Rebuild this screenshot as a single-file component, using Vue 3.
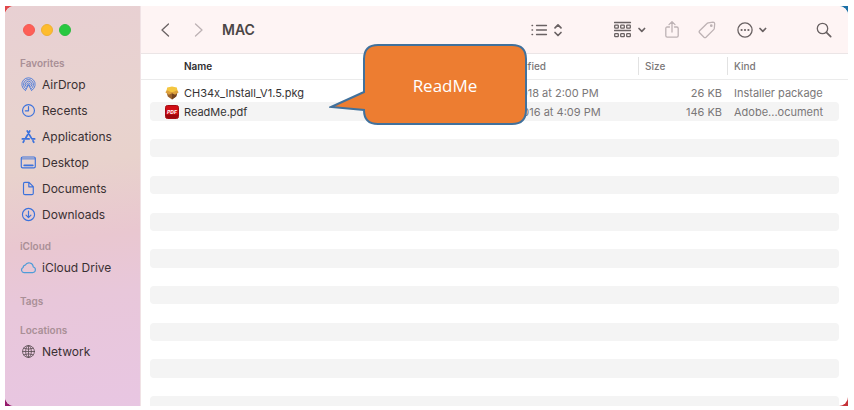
<script setup>
const sections = [
  {
    title: 'Favorites',
    key: 'favorites',
    items: [
      { label: 'AirDrop', icon: 'airdrop' },
      { label: 'Recents', icon: 'clock' },
      { label: 'Applications', icon: 'apps' },
      { label: 'Desktop', icon: 'screen' },
      { label: 'Documents', icon: 'document' },
      { label: 'Downloads', icon: 'download' }
    ]
  },
  { title: 'iCloud', key: 'icloud', items: [{ label: 'iCloud Drive', icon: 'cloud' }] },
  { title: 'Tags', key: 'tags', items: [] },
  { title: 'Locations', key: 'locations', items: [{ label: 'Network', icon: 'globe' }] }
]

const files = [
  { name: 'CH34x_Install_V1.5.pkg', date: 'Jun 5, 2018 at 2:00 PM', size: '26 KB', kind: 'Installer package', icon: 'pkg' },
  { name: 'ReadMe.pdf', date: 'Nov 6, 2016 at 4:09 PM', size: '146 KB', kind: 'Adobe...ocument', icon: 'pdf' }
]

const emptyRows = 15
</script>

<template>
  <main class="page">
    <div class="desktop">
      <div class="window">
        <aside class="sidebar">
          <div class="lights">
            <button class="light red" aria-label="Close"></button>
            <button class="light yellow" aria-label="Minimize"></button>
            <button class="light green" aria-label="Zoom"></button>
          </div>
          <nav>
            <section v-for="s in sections" :key="s.key" class="group" :class="s.key">
              <h2>{{ s.title }}</h2>
              <a v-for="item in s.items" :key="item.label" href="#" class="place" :class="item.icon">
                <svg viewBox="0 0 16 16" aria-hidden="true">
                  <g v-if="item.icon === 'airdrop'">
                    <path d="M4.6 13.3A6.3 6.3 0 1 1 11.4 13.3M5.3 11.9A4.7 4.7 0 1 1 10.7 11.9M6 10.4A3.1 3.1 0 1 1 10 10.4" />
                    <path d="M7 9.2A1.5 1.5 0 1 1 9 9.2M8 8.2 5.2 13.6M8 8.2l2.8 5.4" />
                  </g>
                  <g v-else-if="item.icon === 'clock'">
                    <circle cx="8" cy="8" r="5.6" /><path d="M8 4.3V8.3H5" />
                  </g>
                  <g v-else-if="item.icon === 'apps'" class="bold">
                    <path d="M6.8 2.8 11 10M12.2 12l.8 1.4M9.2 2.8 5.4 9.4M3.8 12l-.8 1.4M2.2 10.3H8.6M11.6 10.3h2.2" />
                  </g>
                  <g v-else-if="item.icon === 'screen'">
                    <rect x="1.2" y="2.8" width="13.2" height="10.2" rx="1.3" />
                    <path d="M1.6 4.6h12.4" class="thin" /><path d="M4 10.7h8" class="dock" />
                  </g>
                  <g v-else-if="item.icon === 'document'">
                    <path d="M4.5 2.2h4l4 4v6.2q0 1.4-1.4 1.4H4.7q-1.4 0-1.4-1.4V3.6q0-1.4 1.2-1.4zM8.3 2.4v4h4" />
                  </g>
                  <g v-else-if="item.icon === 'download'">
                    <circle cx="8" cy="8" r="5.7" /><path d="M8 4.8v6M5.7 8.6 8 10.9l2.3-2.3" />
                  </g>
                  <g v-else-if="item.icon === 'cloud'">
                    <path d="M4.2 12.8H12a2.7 2.7 0 0 0 .5-5.3A4 4 0 0 0 5 5.7 2.3 2.3 0 0 0 3 8a2.5 2.5 0 0 0 1.2 4.8z" />
                  </g>
                  <g v-else class="thin">
                    <circle cx="8" cy="8" r="5.6" /><ellipse cx="8" cy="8" rx="2.7" ry="5.6" />
                    <path d="M2.4 8h11.2M8 2.4v11.2M3.4 4.9q4.6 2 9.2 0M3.4 11.1q4.6-2 9.2 0" />
                  </g>
                </svg>
                <span>{{ item.label }}</span>
              </a>
            </section>
          </nav>
        </aside>

        <section class="content">
          <header class="toolbar">
            <button class="tool back" aria-label="Back">
              <svg width="10" height="16" viewBox="0 0 10 16"><path d="M8.5 2 2 8l6.5 6" /></svg>
            </button>
            <button class="tool forward faded" aria-label="Forward">
              <svg width="10" height="16" viewBox="0 0 10 16"><path d="M1.5 2 8 8 1.5 14" /></svg>
            </button>
            <h1>MAC</h1>
            <button class="tool list" aria-label="View as list">
              <svg width="32" height="18" viewBox="0 0 32 18">
                <path d="M5.5 4.5H15.5M5.5 9H15.5M5.5 13.5H15.5M1 4.5h.6M1 9h.6M1 13.5h.6" />
                <path d="M24 6.800 27 3.800 30 6.800M24 11.500l3 3 3-3" class="heavy" />
              </svg>
            </button>
            <button class="tool grouping" aria-label="Group items">
              <svg width="32" height="18" viewBox="0 0 32 18">
                <path d="M.5 1.500H16.500M.5 9.500H16.500" />
                <rect x=".7" y="4.200" width="3.600" height="3" rx=".6" /><rect x="6.700" y="4.200" width="3.600" height="3" rx=".6" /><rect x="12.700" y="4.200" width="3.600" height="3" rx=".6" />
                <rect x=".7" y="12.700" width="3.600" height="3" rx=".6" /><rect x="6.700" y="12.700" width="3.600" height="3" rx=".6" /><rect x="12.700" y="12.700" width="3.600" height="3" rx=".6" />
                <path d="m25 7.500 2.800 2.800 2.800-2.800" class="heavy" />
              </svg>
            </button>
            <button class="tool share faded" aria-label="Share">
              <svg width="14" height="20" viewBox="0 0 14 20">
                <path d="M4.500 7H2.200Q.8 7 .8 8.400v7.400q0 1.400 1.400 1.400h9.600q1.400 0 1.400-1.400V8.400Q13.200 7 11.800 7H9.500M7 12V1.800M4 4.600l3-3 3 3" />
              </svg>
            </button>
            <button class="tool tag faded" aria-label="Edit tags">
              <svg width="18" height="18" viewBox="0 0 18 18">
                <path d="M10.300 1.800 15 1.200q1.600 0 1.700 1.600l-.4 4.600q-.1.700-.6 1.200L8 16.200q-1 .9-2 0L1.600 11.800q-.9-1 0-2L9 2.500q.5-.6 1.300-.7z" /><circle cx="13.300" cy="4.700" r=".7" />
              </svg>
            </button>
            <button class="tool more" aria-label="More actions">
              <svg width="31" height="18" viewBox="0 0 31 18">
                <circle cx="8" cy="9" r="7.100" /><g class="dots"><circle cx="4.600" cy="9" r="1.100" /><circle cx="8" cy="9" r="1.100" /><circle cx="11.400" cy="9" r="1.100" /></g>
                <path d="m23 7.500 2.800 2.800 2.800-2.800" class="heavy" />
              </svg>
            </button>
            <button class="tool search" aria-label="Search">
              <svg width="16" height="16" viewBox="0 0 16 16"><circle cx="6.500" cy="6.500" r="5.200" /><path d="m10.400 10.400 4.300 4.300" class="heavy" /></svg>
            </button>
          </header>

          <table>
            <thead>
              <tr>
                <th scope="col" class="name">Name</th>
                <th scope="col">Date Modified</th>
                <th scope="col" class="ruled">Size</th>
                <th scope="col" class="ruled">Kind</th>
              </tr>
            </thead>
            <tbody>
              <tr v-for="f in files" :key="f.name">
                <td class="name">
                  <svg v-if="f.icon === 'pkg'" width="14" height="14" viewBox="0 0 14 14" aria-hidden="true">
                    <path d="M1.500 6 12.500 6 11.200 10.500 7 13.500 2.800 10.500z" fill="#98602b" />
                    <path d="M7 7v6.500l4.200-3L12.500 6z" fill="#73431e" />
                    <path d="M2.200 1.500 7 .5l4.800 1L12.600 5 7 6.800 1.400 5z" fill="#f4c640" />
                    <path d="M.3 6.200 2 4.300 7 6.500l5-2.200 1.700 1.900-3.600 2.600L7 7.300 3.900 8.800z" fill="#dda03b" />
                  </svg>
                  <svg v-else width="14" height="14" viewBox="0 0 14 14" aria-hidden="true">
                    <rect x=".5" y=".5" width="13" height="13" rx="2" fill="#d20f16" stroke="#a50c12" />
                    <path d="M1 9.500h12v2q0 1.500-1.500 1.500h-9Q1 13 1 11.500z" fill="#9e070d" />
                    <text x="7" y="8.800" text-anchor="middle" class="badge">PDF</text>
                  </svg>
                  <span>{{ f.name }}</span>
                </td>
                <td>{{ f.date }}</td>
                <td class="size">{{ f.size }}</td>
                <td>{{ f.kind }}</td>
              </tr>
              <tr v-for="n in emptyRows" :key="n"><td colspan="4"></td></tr>
              <tr class="cut"><td colspan="4"></td></tr>
            </tbody>
          </table>
        </section>
      </div>
    </div>

    <div class="callout">
      <svg width="200" height="84" viewBox="0 0 200 84" aria-hidden="true">
        <path d="M49 2H183Q197 2 197 16V67Q197 81 183 81H49Q35 81 35 67V67L2 64 35 49V16Q35 2 49 2z" />
      </svg>
      <p>ReadMe</p>
    </div>
  </main>
</template>

<style>
body {
  background: #fff;
}
</style>

<style scoped>
* {
  box-sizing: border-box;
}
.page {
  position: relative;
  height: 100vh;
  padding: 6px 6px 4px 5px;
  overflow: hidden;
  font-family: Inter, "Liberation Sans", sans-serif;
  font-size: 11px;
  color: #7a7778;
}
.desktop {
  height: 100%;
  background:
    linear-gradient(#1b70a7, #1b70a7) top right / 50% 50% no-repeat,
    linear-gradient(#c63238, #c63238) bottom right / 50% 50% no-repeat,
    linear-gradient(#e0464a 50%, #95196b 50%);
}
.window {
  display: flex;
  height: 100%;
  border-radius: 9px;
  overflow: hidden;
  background: #fff;
}
.sidebar {
  flex: 0 0 136px;
  padding: 18px 0 0 15px;
  background: linear-gradient(172deg, #e8d0d3 0%, #e8d3cf 28%, #e8d2cc 40%, #e9c7d0 58%, #e8c7da 72%, #e8c6e2 100%);
  border-right: 1px solid #f0e2e5;
}
.lights {
  display: flex;
  gap: 6px;
  padding-left: 3px;
  margin-bottom: 19px;
}
.light {
  width: 12px;
  height: 12px;
  padding: 0;
  border: 1px solid transparent;
  border-radius: 50%;
}
.red { background: #fe5f57; border-color: #f35a53; }
.yellow { background: #febc2e; border-color: #eeb033; }
.green { background: #28c840; border-color: #2dbc42; }
h2 {
  margin: 0;
  font-size: 10px;
  line-height: 16px;
  font-weight: 600;
  color: #a98f96;
}
.group {
  display: grid;
  grid-auto-rows: 26px;
  grid-template-rows: 16px;
}
.icloud { margin-top: 11px; }
.tags { margin-top: 13px; }
.locations { margin-top: 13px; }
.place {
  display: flex;
  align-items: center;
  gap: 5px;
  font-size: 12px;
  font-weight: 400;
  color: #3a3033;
  text-decoration: none;
}
.place svg {
  width: 17px;
  height: 17px;
  fill: none;
  stroke: #3c72dc;
  stroke-width: 1.1;
  stroke-linecap: round;
  stroke-linejoin: round;
}
.place.cloud svg { stroke: #4f9cd8; }
.place.globe svg { stroke: #5f5157; }
.place.airdrop svg { stroke-width: 0.8; }
.bold { stroke-width: 1.6; }
.thin { stroke-width: 0.8; }
.dock { stroke-width: 1.8; }
.content {
  flex: 1;
  min-width: 0;
  display: flex;
  flex-direction: column;
}
.toolbar {
  flex: 0 0 48px;
  display: flex;
  align-items: center;
  padding: 0 16px 0 19px;
  background: #fef4f4;
  border-bottom: 1px solid #ebe5e6;
}
h1 {
  flex: 1;
  margin: 0 0 0 18px;
  font-size: 14px;
  line-height: 20px;
  font-weight: 600;
  color: #4b4646;
}
.tool {
  display: flex;
  padding: 0;
  border: 0;
  background: none;
}
.tool svg {
  fill: none;
  stroke: #6a6263;
  stroke-width: 1.3;
  stroke-linecap: round;
  stroke-linejoin: round;
}
.tool.faded svg { stroke: #bdb2b4; }
.heavy { stroke-width: 1.7; }
.dots { fill: #6a6263; stroke: none; }
.forward { margin-left: 24px; }
.grouping { margin-left: 51px; }
.share { margin-left: 19px; }
.tag { margin-left: 19px; }
.more { margin-left: 21px; }
.search { margin-left: 48px; }
table {
  flex: 1;
  min-height: 0;
  display: flex;
  flex-direction: column;
}
thead {
  flex: 0 0 26px;
  border-bottom: 1px solid #ebebeb;
}
tr {
  display: grid;
  grid-template-columns: 1fr 166px 89px 112px;
  align-items: center;
  margin: 0 9px;
}
th {
  padding: 0 7px;
  font-size: 10px;
  line-height: 18px;
  font-weight: 500;
  text-align: left;
}
thead tr { padding-top: 3px; }
th.name {
  padding-left: 34px;
  font-weight: 600;
  color: #302e2f;
}
.ruled { border-left: 1px solid #e2e2e2; padding-left: 6px; }
tbody {
  flex: 1;
  min-height: 0;
  display: flex;
  flex-direction: column;
  padding-top: 4px;
}
tbody tr {
  flex: 1;
  min-height: 0;
  border-radius: 4px;
}
tbody tr:nth-child(even) { background: #f4f4f4; }
tbody tr.cut {
  flex: 0 0 10px;
  border-radius: 4px 4px 0 0;
}
td {
  padding: 0 7px;
  line-height: 18px;
  white-space: nowrap;
}
td[colspan] { padding: 0; }
td.name {
  display: flex;
  align-items: center;
  gap: 5px;
  padding-left: 15px;
  color: #353334;
}
td.size {
  padding-right: 5px;
  text-align: right;
}
.badge {
  font: italic 700 5px Inter, sans-serif;
  fill: #fff;
}
.callout {
  position: absolute;
  left: 329px;
  top: 43px;
  width: 200px;
}
.callout svg {
  display: block;
  fill: #ed7d31;
  stroke: #41719c;
  stroke-width: 2;
  stroke-linejoin: miter;
}
.callout p {
  position: absolute;
  inset: 0 3px 0 35px;
  display: flex;
  align-items: center;
  justify-content: center;
  margin: 0;
  font: 400 17px "Open Sans", "Noto Sans", sans-serif;
  color: #fff;
}
</style>
